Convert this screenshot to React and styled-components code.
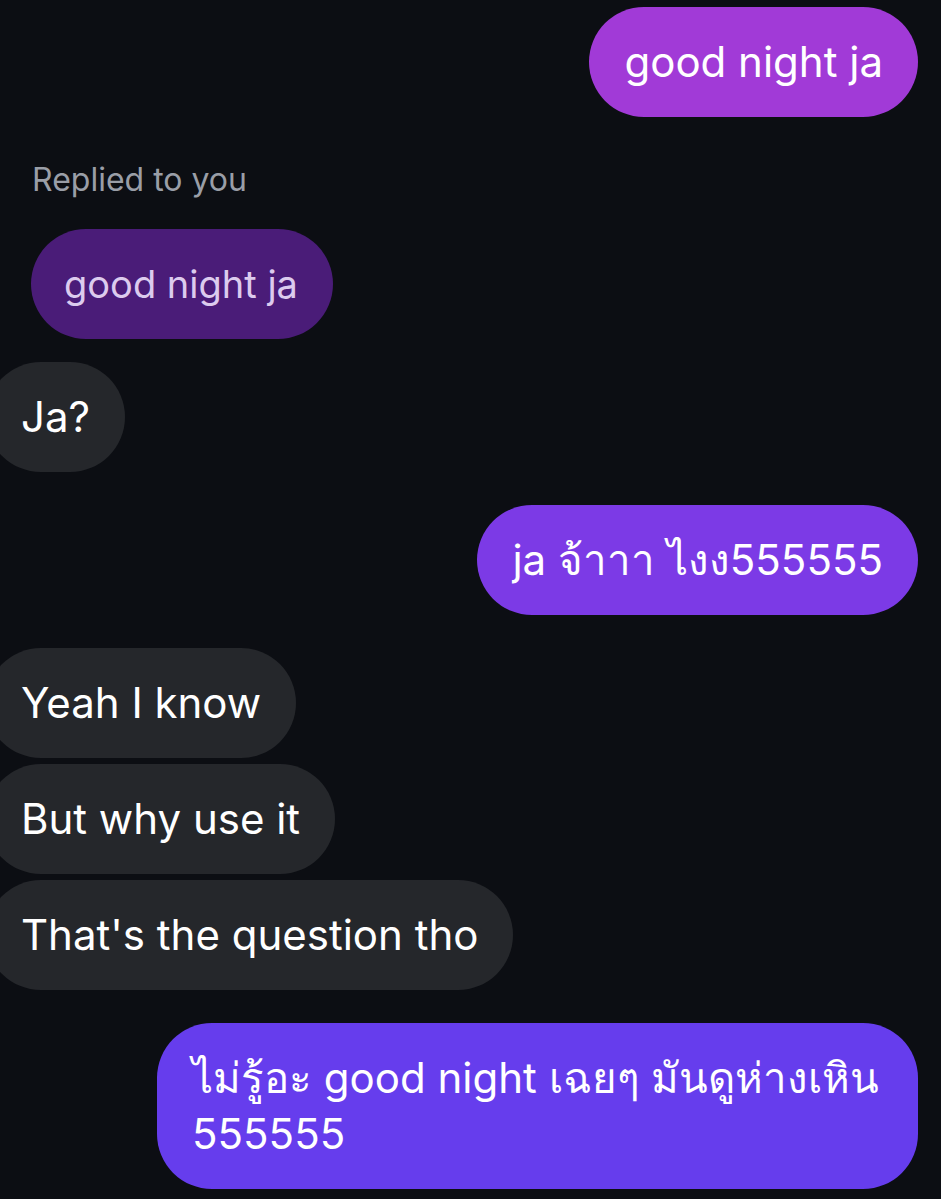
import styled, { createGlobalStyle } from "styled-components";

const Global = createGlobalStyle`
  html, body {
    margin: 0;
    padding: 0;
    background: #0c0e13;
  }
  body {
    font-family: Inter, "Noto Sans", "DejaVu Sans", sans-serif;
    -webkit-font-smoothing: antialiased;
  }
`;

const Thread = styled.div`
  display: flex;
  flex-direction: column;
  width: 941px;
  min-height: 1199px;
  padding: 7px 23px 0 0;
  box-sizing: border-box;
  overflow: hidden;
  background: #0c0e13;
`;

const Bubble = styled.div`
  box-sizing: border-box;
  max-width: 761px;
  padding: 27px 35px 27px 35px;
  border-radius: 55px;
  font-size: 42px;
  line-height: 56px;
  color: #ffffff;
  background: ${({ $bg }) => $bg || "#25272b"};
  margin-top: ${({ $gap }) => $gap || 0}px;
  align-self: ${({ $mine }) => ($mine ? "flex-end" : "flex-start")};
  margin-left: ${({ $mine }) => ($mine ? 0 : -14)}px;
`;

const ReplyLabel = styled.div`
  margin: 43px 0 0 32px;
  font-size: 32px;
  line-height: 40px;
  color: #9a9ea7;
`;

const ReplyBubble = styled.div`
  align-self: flex-start;
  margin: 29px 0 0 31px;
  padding: 27px 35px 27px 33px;
  border-radius: 55px;
  font-size: 38px;
  line-height: 56px;
  color: #dccbee;
  background: #4a1c78;
`;

export default function App() {
  return (
    <>
      <Global />
      <Thread>
        <Bubble $mine $bg="#a13ad7">good night ja</Bubble>
        <ReplyLabel>Replied to you</ReplyLabel>
        <ReplyBubble>good night ja</ReplyBubble>
        <Bubble $gap={23}>Ja?</Bubble>
        <Bubble $mine $gap={33} $bg="#7c3ae6">ja จ้าาา ไงง555555</Bubble>
        <Bubble $gap={33}>Yeah I know</Bubble>
        <Bubble $gap={6}>But why use it</Bubble>
        <Bubble $gap={6}>That's the question tho</Bubble>
        <Bubble $mine $gap={33} $bg="#663ded">
          ไม่รู้อะ good night เฉยๆ มันดูห่างเหิน 555555
        </Bubble>
      </Thread>
    </>
  );
}
